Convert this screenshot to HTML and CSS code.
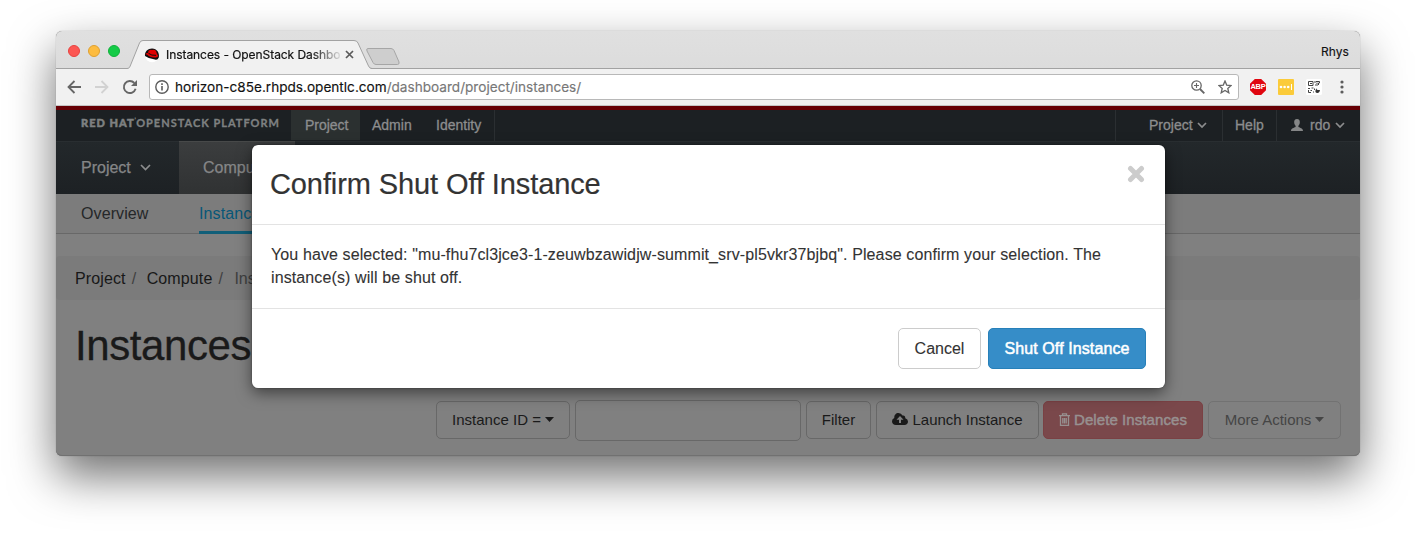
FILE: index.html
```html
<!DOCTYPE html>
<html lang="en">
<head>
<meta charset="utf-8">
<title>Instances - OpenStack Dashboard</title>
<link rel="stylesheet" href="styles.css">
</head>
<body>
<div class="window">
  <header class="titlebar">
    <div class="lights"><i class="red"></i><i class="amber"></i><i class="green"></i></div>
    <div class="tab">
      <svg class="tab-shape" width="278" height="30" viewBox="0 0 278 30"><path d="M0 28.500H2C4 28.500 4.500 27.500 5.200 26L14.500 3Q15.500.5 18 .5H229Q232 .5 233 3L243.500 26Q244.500 28.500 246 28.500V30H0Z" fill="#f1f1f1"/><path d="M0 28.500H2C4 28.500 4.500 27.500 5.200 26L14.500 3Q15.500.5 18 .5H229Q232 .5 233 3L243.500 26Q244.500 28.500 247 28.500" fill="none" stroke="#a2a2a2"/><path d="M243 8.500H266Q268 8.500 269 10.500L274 22Q274.500 24.500 272.500 24.500H251Q249 24.500 248 22.500L242 11Q241 8.500 243 8.500Z" fill="#cecece" stroke="#a6a6a6"/></svg>
      <svg class="favicon" width="16" height="16" viewBox="0 0 16 16"><circle cx="8" cy="8.500" r="6.800" fill="#fff"/><path d="M1 9C.5 4.500 4 1.500 8 1.500C13 1.500 15.800 6 14.800 10.500Q13.500 13.500 11 12.500Q5 12 1 9Z" fill="#111"/><path d="M4.500 3.800Q6.500 2.200 8 3Q10.500 2 12 4L13 7Q15.500 9.500 12 10.500Q6 11 3 7.500L1.500 7.500Q1.500 5.500 4 6Z" fill="#e00000"/><path d="M4.500 6.300Q7.500 8.800 12 8.300" stroke="#111" stroke-width="1" fill="none"/></svg>
      <span class="tab-title">Instances - OpenStack Dashbo</span>
      <svg class="tab-close" width="9" height="9" viewBox="0 0 9 9"><path d="M1 1L8 8M8 1L1 8" stroke="#5a5a5a" stroke-width="1.700"/></svg>
    </div>
    <span class="profile">Rhys</span>
  </header>
  <div class="toolbar">
    <svg class="back" width="14" height="14" viewBox="0 0 14 14"><path d="M14 7H1.500M7.500 1L1.500 7L7.500 13" fill="none" stroke="#666" stroke-width="1.800"/></svg>
    <svg class="forward" width="14" height="14" viewBox="0 0 14 14"><path d="M0 7H12.500M6.500 1L12.500 7L6.500 13" fill="none" stroke="#d2d2d2" stroke-width="1.800"/></svg>
    <svg class="reload" width="16" height="16" viewBox="0 0 16 16"><path d="M13.600 9.800A6 6 0 1 1 12.300 4" fill="none" stroke="#666" stroke-width="1.900"/><path d="M15 1V7H9Z" fill="#666"/></svg>
    <div class="address">
      <svg width="14" height="14" viewBox="0 0 14 14"><circle cx="7" cy="7" r="6.200" fill="none" stroke="#5c5c5c" stroke-width="1.400"/><path d="M7 6V10.500M7 3.300V5" stroke="#5c5c5c" stroke-width="1.600"/></svg>
      <span class="url">horizon-c85e.rhpds.opentlc.com<span class="path">/dashboard/project/instances/</span></span>
      <svg class="magnify" width="14" height="14" viewBox="0 0 14 14"><circle cx="5.500" cy="5.500" r="4.700" fill="none" stroke="#666" stroke-width="1.300"/><path d="M9 9L13.300 13.300" stroke="#666" stroke-width="1.900"/><path d="M3 5.500H8M5.500 3V8" stroke="#666" stroke-width="1.100"/></svg>
      <svg width="14" height="14" viewBox="0 0 14 14"><path d="M7 1L8.700 5.100L13.100 5.500L9.800 8.400L10.800 12.800L7 10.500L3.200 12.800L4.200 8.400L.9 5.500L5.300 5.100Z" fill="none" stroke="#666" stroke-width="1.300"/></svg>
    </div>
    <div class="abp">ABP</div>
    <svg class="dots-ext" width="16" height="16" viewBox="0 0 16 16"><rect width="16" height="16" rx="1" fill="#fbcb3a"/><circle cx="3" cy="8" r="1.300" fill="#fff"/><circle cx="6.600" cy="8" r="1.300" fill="#fff"/><circle cx="10.200" cy="8" r="1.300" fill="#fff"/><path d="M13.500 5V11" stroke="#fff"/></svg>
    <svg class="qr" width="16" height="16" viewBox="0 0 16 16"><rect width="16" height="16" rx="1.500" fill="#fff"/><g fill="none" stroke="#444"><path d="M2.500 2.500H7V6.500H2.500ZM4 4.500H6M9 2V4M9 6H10M11 3.500V7M10 2.500H13.500V4H12.500V6"/><path d="M2 9.500H4M5.500 9H7.500M2.500 11V13.500H5M4.500 11.500H6M7 13H8M8.500 9.500V11"/></g><path d="M10.500 9Q10 11.500 14 11Q13.500 14.300 11 14Q8 13.500 10.500 9Z" fill="#333"/></svg>
    <svg class="menu" width="4" height="14" viewBox="0 0 4 14"><g fill="#5c5c5c"><circle cx="2" cy="2" r="1.600"/><circle cx="2" cy="7" r="1.600"/><circle cx="2" cy="12" r="1.600"/></g></svg>
  </div>
  <div class="page">
    <nav class="topnav">
      <div class="brand"><b>RED HAT</b><sup>’</sup>OPENSTACK PLATFORM</div>
      <a class="active">Project</a><a class="admin">Admin</a><a class="identity">Identity</a>
      <div class="nav-right">
        <a class="nav-project">Project <svg width="10" height="7" viewBox="0 0 10 7"><path d="M1 1L5 5L9 1" fill="none" stroke="#8c8d8e" stroke-width="1.700"/></svg></a>
        <a class="nav-help">Help</a>
        <a class="nav-user"><svg width="12" height="12" viewBox="0 0 12 12"><path d="M6 0C8.200 0 9 1.500 8.800 3.700C8.700 5.300 8 6 7.400 6.800V8C9 8.800 12 9.300 12 12H0C0 9.300 3 8.800 4.600 8V6.800C4 6 3.300 5.300 3.200 3.700C3 1.500 3.800 0 6 0Z" fill="#858687"/></svg><span>rdo</span><svg width="10" height="7" viewBox="0 0 10 7"><path d="M1 1L5 5L9 1" fill="none" stroke="#8c8d8e" stroke-width="1.700"/></svg></a>
      </div>
    </nav>
    <nav class="mainnav">
      <a>Project <svg width="11" height="7" viewBox="0 0 11 7"><path d="M1 1L5.500 5.500L10 1" fill="none" stroke="#8c8d8e" stroke-width="1.700"/></svg></a>
      <a class="active">Compute</a>
    </nav>
    <nav class="subnav"><a>Overview</a><a class="active">Instances</a></nav>
    <div class="crumbs"><span>Project</span><i>/</i><span>Compute</span><i>/</i><em>Ins</em></div>
    <h1>Instances</h1>
    <div class="actions">
      <button class="filter-type">Instance ID = <svg width="9" height="5" viewBox="0 0 9 5"><path d="M0 0H9L4.500 5Z" fill="currentColor"/></svg></button>
      <input type="text" aria-label="Filter">
      <button class="filter">Filter</button>
      <button class="launch"><svg width="16" height="12" viewBox="0 0 16 12"><path fill="#1a1a1a" fill-rule="evenodd" d="M4 12C1.500 12 0 10.500 0 8.300Q0 6 2.300 5C2 2 4 0 6.500 0Q9.300 0 10.500 2.500Q13.300 2 13.300 5.200Q16 6 16 8.500C16 10.700 14.500 12 12.500 12ZM8 3L4.500 6.700H7V10H9V6.700H11.500Z"/></svg>Launch Instance</button>
      <button class="delete"><svg width="11" height="13" viewBox="0 0 11 13"><path d="M0 2.700H11M3.500 2.500V.8H7.500V2.500M1.500 3V12.300H9.500V3M3.800 5V10.500M5.500 5V10.500M7.200 5V10.500" fill="none" stroke="#979090" stroke-width="1.300"/></svg>Delete Instances</button>
      <button class="more">More Actions <svg width="9" height="5" viewBox="0 0 9 5"><path d="M0 0H9L4.500 5Z" fill="currentColor"/></svg></button>
    </div>
    <section class="modal" role="dialog">
      <header><h2>Confirm Shut Off Instance</h2><svg width="18" height="18" viewBox="0 0 18 18"><path d="M3.500 3.500L14.500 14.500M14.500 3.500L3.500 14.500" stroke="#ccc" stroke-width="5" stroke-linecap="round"/></svg></header>
      <p>You have selected: "mu-fhu7cl3jce3-1-zeuwbzawidjw-summit_srv-pl5vkr37bjbq". Please confirm your selection. The<br>instance(s) will be shut off.</p>
      <footer><button class="cancel">Cancel</button><button class="primary">Shut Off Instance</button></footer>
    </section>
  </div>
</div>
</body>
</html>
```
FILE: styles.css
```css
* { box-sizing: border-box; }
body { margin: 0; height: 535px; padding: 31px 56px 0; overflow: hidden; background: #fff; font-family: "Liberation Sans", Arial, sans-serif; font-size: 16px; }
svg { display: block; flex: none; }
button, input { font: inherit; margin: 0; }
a { white-space: nowrap; }

.window { position: relative; width: 1304px; height: 425px; border-radius: 6px; background: #808080; box-shadow: 0 0 1px rgba(0,0,0,.4), 0 20px 46px rgba(0,0,0,.56); }
.titlebar { display: flex; height: 38px; padding: 0 11px; border-radius: 6px 6px 0 0; background: linear-gradient(#e0e0e0, #dcdcdc); border-bottom: 1px solid #a2a2a2; }
.lights { display: flex; gap: 8px; padding-top: 14px; width: 57px; margin-left: 1px; }
.lights i { width: 12px; height: 12px; border-radius: 50%; flex: none; }
.lights .red { background: #fc5753; border: 1px solid #e8423f; }
.lights .amber { background: #fdbc40; border: 1px solid #dfa030; }
.lights .green { background: #14cb47; border: 1px solid #10b13b; }
.tab { position: relative; display: flex; align-items: center; height: 30px; width: 247px; margin-top: 9px; padding: 0 0 1px 19px; font: 12px Inter, sans-serif; }
.tab-shape { position: absolute; left: 0; top: 0; z-index: 0; }
.favicon, .tab-title, .tab-close { position: relative; }
.tab-title { width: 175px; margin-left: 6px; overflow: hidden; white-space: nowrap; letter-spacing: -.06px; color: #111; -webkit-text-stroke: .2px; -webkit-mask-image: linear-gradient(to right, #000 145px, transparent 178px); }
.tab-close { margin-left: 4px; }
.profile { margin-left: auto; padding-top: 12px; font: 12px/17px Inter, sans-serif; letter-spacing: .1px; color: #111; -webkit-text-stroke: .15px; }

.toolbar { display: flex; align-items: center; height: 37px; padding-left: 11px; border-bottom: 1px solid #c5c5c5; background: #f1f1f1; }
.forward { margin-left: 14px; }
.reload { margin-left: 13px; }
.address { display: flex; align-items: center; width: 1090px; height: 26px; margin-left: 11px; padding: 0 6px 0 5px; border: 1px solid #b8b8b8; border-radius: 3px; background: #fff; }
.url { margin: -1px 0 0 6px; font: 13.600px Inter, sans-serif; white-space: nowrap; color: #111; -webkit-text-stroke: .15px; }
.path { color: #777; }
.magnify { margin: 0 13px 0 auto; }
.abp { width: 16px; height: 16px; margin-left: 11px; background: #e00610; clip-path: polygon(30% 0,70% 0,100% 30%,100% 70%,70% 100%,30% 100%,0 70%,0 30%); font: bold 7.500px/16px "Liberation Sans", sans-serif; letter-spacing: -.2px; text-align: center; color: #fff; }
.dots-ext { margin-left: 12px; }
.qr { margin-left: 12px; }
.menu { margin-left: 18px; }

.page { position: relative; height: 350px; border-top: 4px solid #670005; border-bottom: 1px solid #717171; background: #808080; border-radius: 0 0 6px 6px; color: #1a1a1a; }
.topnav { display: flex; height: 31px; background: #1c2023; font-size: 14px; line-height: 30px; color: #8c8d8e; -webkit-text-stroke: .3px; }
.brand { width: 235px; padding-left: 25px; font: bold 11px/26px Lato, sans-serif; letter-spacing: 1px; white-space: nowrap; color: #7e8081; }
.brand b { font-weight: 900; -webkit-text-stroke: .5px; }
.brand sup { font-size: 6px; line-height: 0; letter-spacing: .3px; }
.topnav .active { width: 69px; height: 30px; padding-left: 14px; letter-spacing: -.05px; background: #2b3030; }
.admin { width: 64px; padding-left: 12px; }
.identity { width: 71px; padding-left: 12px; border-right: 1px solid #2b2f32; }
.nav-right { display: flex; margin-left: auto; }
.nav-right a { display: flex; align-items: center; height: 31px; padding-bottom: 1px; border-left: 1px solid #2b2f32; }
.nav-right a.nav-project { width: 107px; padding-left: 33px; gap: 4px; }
.nav-right a.nav-help { width: 54px; padding-left: 12px; }
.nav-right a.nav-user { width: 84px; padding-left: 14px; }
.nav-user span { margin: 0 5px 0 7px; }
.mainnav { display: flex; height: 53px; background: linear-gradient(#23282b, #1d2124); box-shadow: inset 0 1px #292e31; line-height: 51px; color: #858687; -webkit-text-stroke: .25px; }
.mainnav a { display: flex; align-items: center; gap: 9px; width: 123px; padding-left: 25px; }
.mainnav .active { width: 116px; padding: 0 0 2px 24px; background: linear-gradient(#3b3d3e, #303233); border-top: 1px solid #474949; }
.subnav { display: flex; height: 40px; padding-left: 25px; background: #7c7c7c; border-bottom: 1px solid #686868; line-height: 39px; letter-spacing: .1px; color: #252729; }
.subnav a { width: 118px; height: 40px; }
.subnav .active { width: 72px; color: #075778; border-bottom: 3px solid #115f79; }
.crumbs { display: flex; height: 44px; margin-top: 22px; padding-left: 19px; background: #7b7b7b; border-radius: 4px; line-height: 45px; }
.crumbs i { width: 21px; padding-left: 6px; font-style: normal; color: #404040; }
.crumbs em { padding-left: 1px; font-style: normal; color: #404040; }
.crumbs span { letter-spacing: .12px; color: #181818; }
h1 { margin: 21px 0 0 19px; font-size: 42px; line-height: 50px; font-weight: normal; letter-spacing: -.4px; -webkit-text-stroke: .3px; }
.actions { display: flex; align-items: flex-start; justify-content: flex-end; height: 41px; margin-top: 29px; padding-right: 19px; font-size: 15px; }
.actions button { display: flex; align-items: center; justify-content: center; gap: 4px; height: 38px; margin-top: 1px; padding: 0 0 2px; border: 1px solid #686868; border-radius: 5px; background: none; color: #1a1a1a; white-space: nowrap; }
.actions .filter-type { width: 134px; margin-right: 5px; }
.actions input { width: 226px; height: 41px; margin-right: 5px; border: 1px solid #686868; border-radius: 5px; background: none; }
.actions .filter { width: 65px; margin-right: 5px; }
.actions .launch { width: 163px; margin-right: 4px; }
.actions .delete { width: 160px; margin-right: 5px; background: #7a484b; border-color: #7a4144; color: #979090; letter-spacing: .08px; -webkit-text-stroke: .5px; }
.actions .more { width: 133px; border-color: #727272; color: #454545; }

.modal { position: absolute; left: 196px; top: 35px; width: 913px; height: 243px; border-radius: 6px; background: #fff; box-shadow: 0 5px 15px rgba(0,0,0,.5), 0 0 2px rgba(0,0,0,.4); color: #333; }
.modal header { display: flex; justify-content: space-between; height: 80px; padding: 20px 20px 0 18px; border-bottom: 1px solid #e3e3e3; }
h2 { margin: 0; font-size: 29px; line-height: 38px; font-weight: normal; letter-spacing: -.1px; white-space: nowrap; -webkit-text-stroke: .2px; }
.modal p { height: 84px; margin: 0; padding: 18px 0 0 19px; border-bottom: 1px solid #e3e3e3; line-height: 23px; letter-spacing: .11px; white-space: nowrap; -webkit-text-stroke: .1px; }
.modal footer { display: flex; justify-content: flex-end; gap: 7px; padding: 19px 19px 0 0; }
.modal button { height: 41px; padding: 0; border-radius: 5px; white-space: nowrap; }
.cancel { width: 83px; border: 1px solid #ccc; background: #fff; color: #333; -webkit-text-stroke: .1px; }
.primary { width: 158px; border: 1px solid #2780b9; background: #368dc8; color: #fff; letter-spacing: .1px; -webkit-text-stroke: .5px; }
```
